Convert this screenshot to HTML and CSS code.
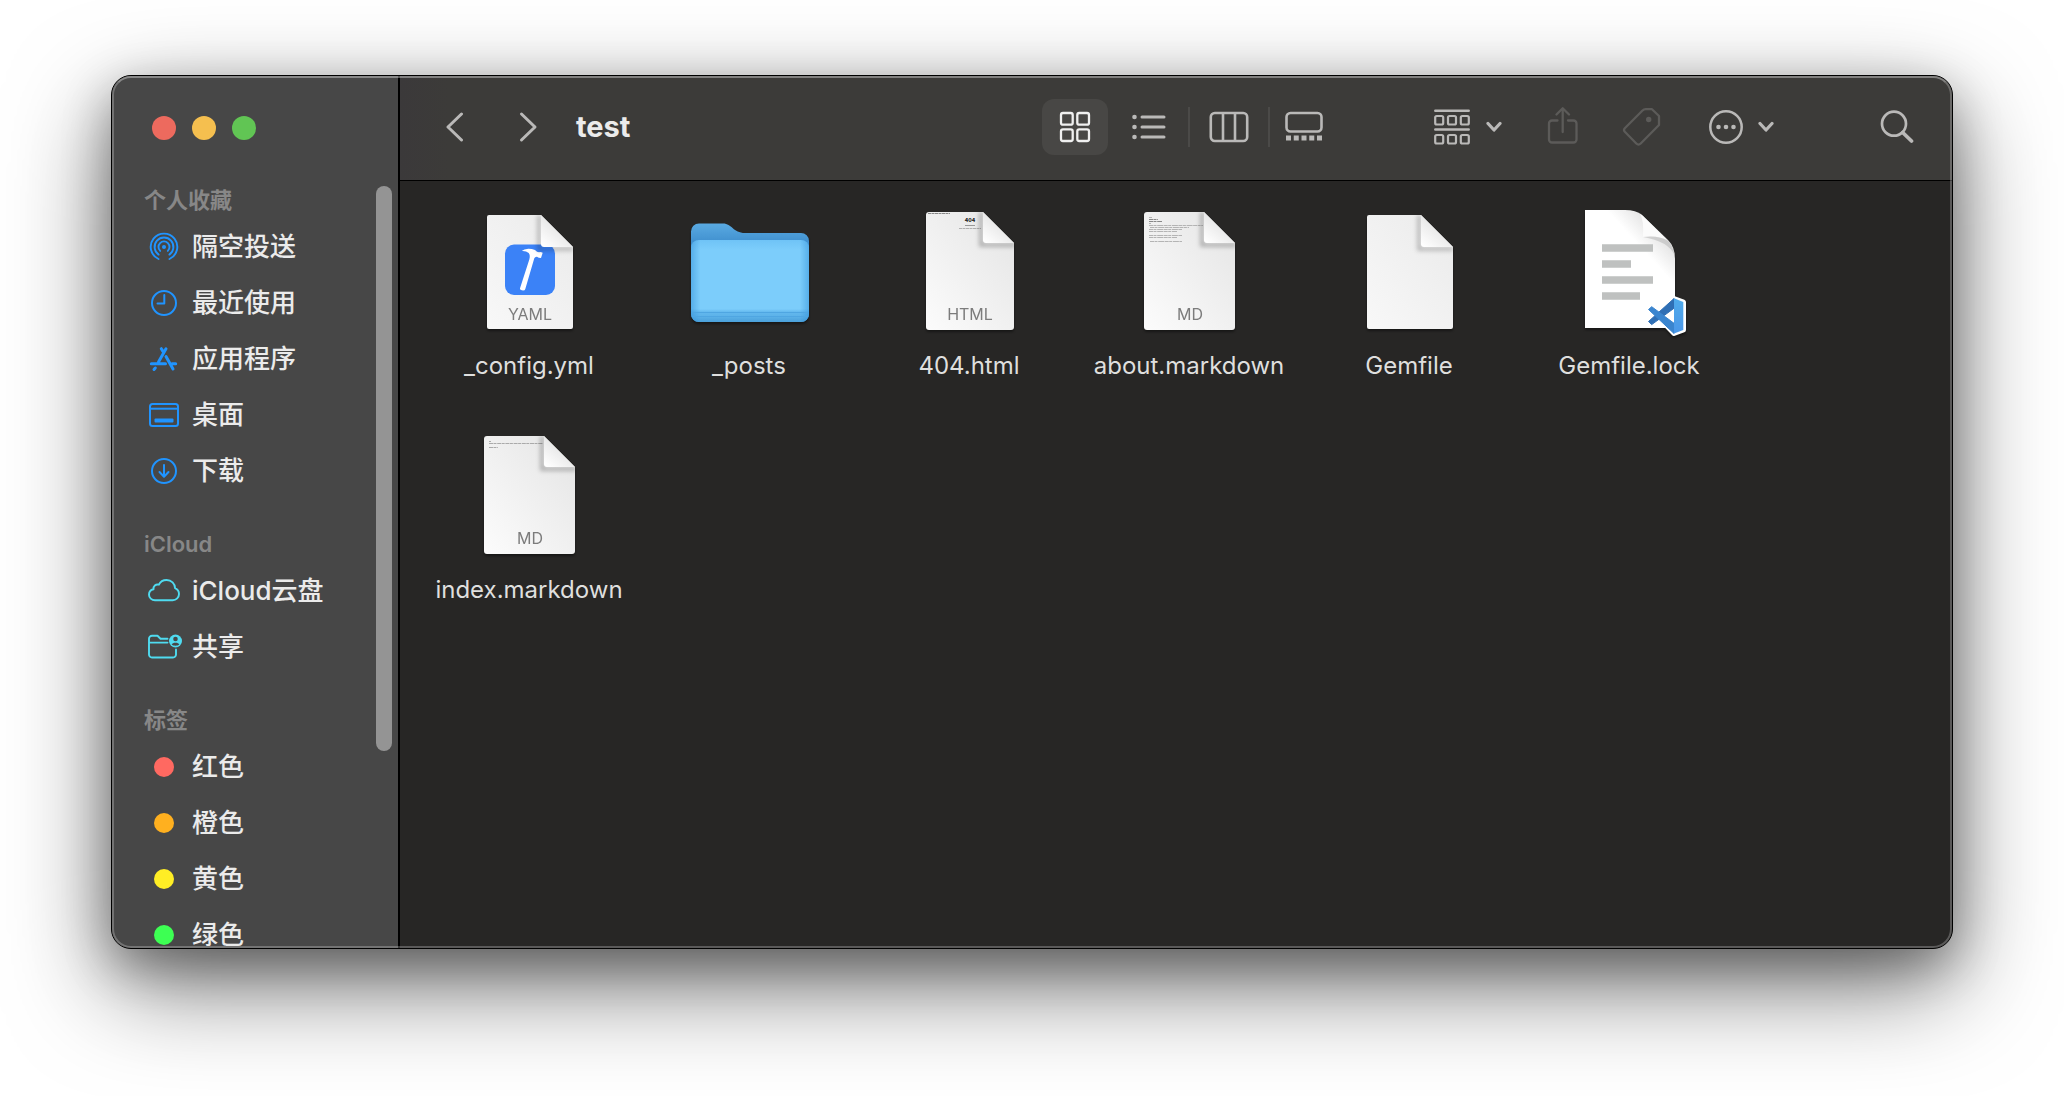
FILE: index.html
```html
<!DOCTYPE html>
<html lang="zh-CN">
<head>
<meta charset="utf-8">
<meta name="viewport" content="width=device-width, initial-scale=1">
<title>test</title>
<link rel="stylesheet" href="styles.css">
</head>
<body>
<svg class="defs" aria-hidden="true">
  <defs>
    <linearGradient id="paper" x1="1" y1="0.2" x2="0" y2="1">
      <stop offset="0" stop-color="#e4e4e4"/><stop offset="1" stop-color="#ffffff"/>
    </linearGradient>
    <linearGradient id="paper-plain" x1="1" y1="0.2" x2="0" y2="1">
      <stop offset="0" stop-color="#eaeaea"/><stop offset="1" stop-color="#fafafa"/>
    </linearGradient>
    <linearGradient id="fold" x1="0.1" y1="1" x2="0.6" y2="0.4">
      <stop offset="0" stop-color="#ffffff"/><stop offset="1" stop-color="#e6e6e6"/>
    </linearGradient>
    <linearGradient id="folder-back" x1="0" y1="0" x2="0" y2="1">
      <stop offset="0" stop-color="#5aaae2"/><stop offset="0.2" stop-color="#3f8fce"/><stop offset="1" stop-color="#3f8fce"/>
    </linearGradient>
    <linearGradient id="folder-front" x1="0" y1="0" x2="0" y2="1">
      <stop offset="0" stop-color="#6fc3f6"/><stop offset="0.12" stop-color="#7ccdfb"/><stop offset="0.84" stop-color="#7ccdfb"/><stop offset="0.88" stop-color="#63b8ee"/><stop offset="0.93" stop-color="#5cb2e9"/><stop offset="1" stop-color="#4ba0da"/>
    </linearGradient>
    <linearGradient id="folder-sides" x1="0" y1="0" x2="1" y2="0">
      <stop offset="0" stop-color="#2f8fd8" stop-opacity="0.5"/><stop offset="0.08" stop-color="#2f8fd8" stop-opacity="0"/><stop offset="0.92" stop-color="#2f8fd8" stop-opacity="0"/><stop offset="1" stop-color="#2f8fd8" stop-opacity="0.5"/>
    </linearGradient>
    <linearGradient id="lock-paper" x1="0.6" y1="0.3" x2="0.85" y2="0">
      <stop offset="0" stop-color="#ffffff"/><stop offset="1" stop-color="#d2d2d2"/>
    </linearGradient>
    <linearGradient id="code-slab" x1="0" y1="0" x2="0" y2="1">
      <stop offset="0" stop-color="#4fabec"/><stop offset="1" stop-color="#4b97e8"/>
    </linearGradient>
    <filter id="soft" x="-50%" y="-50%" width="200%" height="200%"><feGaussianBlur stdDeviation="2"/></filter>
    <clipPath id="page-wide"><path d="M22 4H79L110 35V119a3 3 0 0 1-3 3H22a3 3 0 0 1-3-3V7a3 3 0 0 1 3-3Z"/></clipPath>
    <clipPath id="page-small"><path d="M24 7H76L108 39V119a2 2 0 0 1-2 2H24a2 2 0 0 1-2-2V9a2 2 0 0 1 2-2Z"/></clipPath>
    <clipPath id="page-html"><path d="M24 4H78L109 35V119a3 3 0 0 1-3 3H24a3 3 0 0 1-3-3V7a3 3 0 0 1 3-3Z"/></clipPath>
    <symbol id="chevron-down" viewBox="0 0 16 12"><path d="M2 2.500L8 9L14 2.500" fill="none" stroke="currentColor" stroke-width="3.200" stroke-linecap="round" stroke-linejoin="round"/></symbol>
  </defs>
</svg>

<main class="window">
  <aside class="sidebar">
    <div class="lights">
      <button class="light light-close" aria-label="关闭"></button>
      <button class="light light-minimize" aria-label="最小化"></button>
      <button class="light light-zoom" aria-label="缩放"></button>
    </div>
    <nav class="places">
      <section class="section">
        <h2 class="section-title">个人收藏</h2>
        <a class="place" href="#airdrop">
          <svg class="place-icon blue" viewBox="0 0 32 32"><g fill="none" stroke="currentColor" stroke-width="1.900" stroke-linecap="round"><path d="M10.500 28A13.300 13.300 0 1 1 21.500 28"/><path d="M10.600 23.600A9.400 9.400 0 1 1 21.400 23.600"/><path d="M12.200 19.900A5.500 5.500 0 1 1 19.800 19.900"/></g><circle cx="16" cy="16" r="2" fill="currentColor"/></svg>
          <span>隔空投送</span></a>
        <a class="place" href="#recents">
          <svg class="place-icon blue" viewBox="0 0 32 32" fill="none" stroke="currentColor" stroke-width="2" stroke-linecap="round" stroke-linejoin="round"><circle cx="16" cy="16" r="12"/><path d="M16.300 8V16.500H9.500"/></svg>
          <span>最近使用</span></a>
        <a class="place" href="#applications">
          <svg class="place-icon blue" viewBox="0 0 32 32" fill="none" stroke="currentColor" stroke-width="3" stroke-linecap="round"><path d="M18 5.700L10.500 19M13.300 5.700L15 8.500M18 13.500L25 26M3.300 20.700H17.500M24 20.700H27.700M7.300 25L6 26.500"/></svg>
          <span>应用程序</span></a>
        <a class="place" href="#desktop">
          <svg class="place-icon blue" viewBox="0 0 32 32"><g fill="none" stroke="currentColor" stroke-width="2"><rect x="2" y="5" width="28" height="22" rx="2.500"/><path d="M2 9.700H30"/></g><rect x="6.500" y="19.500" width="19" height="4" rx="1" fill="currentColor"/></svg>
          <span>桌面</span></a>
        <a class="place" href="#downloads">
          <svg class="place-icon blue" viewBox="0 0 32 32" fill="none" stroke="currentColor" stroke-width="2" stroke-linecap="round" stroke-linejoin="round"><circle cx="16" cy="16" r="12"/><path d="M16 10V21.500M11.500 17L16 21.700L20.500 17"/></svg>
          <span>下载</span></a>
      </section>
      <section class="section">
        <h2 class="section-title">iCloud</h2>
        <a class="place" href="#icloud">
          <svg class="place-icon cyan" viewBox="0 0 32 32" fill="none" stroke="currentColor" stroke-width="1.900" stroke-linejoin="round"><path d="M7 25.200C3.700 25.200 1 22.800 1 19.700C1 17 2.900 14.900 5.500 14.300C5.100 11.300 7.700 8.900 10.900 9.700C12.300 6.700 15.300 5 18.600 5C23.300 5 27 8.600 27.100 13.200C29.600 14.400 31 16.400 31 19C31 22.500 28.300 25.200 24.700 25.200Z"/></svg>
          <span>iCloud云盘</span></a>
        <a class="place" href="#shared">
          <svg class="place-icon cyan" viewBox="0 0 32 32"><path d="M19.500 7.700H12.500L9.500 4.800H4A3 3 0 0 0 1 7.800V23.500A3 3 0 0 0 4 26.500H25A3 3 0 0 0 28 23.500V18.500M1 11.600H19.500" fill="none" stroke="currentColor" stroke-width="1.900" stroke-linecap="round" stroke-linejoin="round"/><circle cx="27.500" cy="10" r="6.500" fill="currentColor"/><circle cx="27.500" cy="8" r="2.300" fill="#474747"/><path d="M23.700 13.600C24.500 11.200 30.500 11.200 31.300 13.600C29.500 15.200 25.500 15.200 23.700 13.600Z" fill="#474747"/></svg>
          <span>共享</span></a>
      </section>
      <section class="section">
        <h2 class="section-title">标签</h2>
        <a class="place" href="#red"><span class="tag tag-red"></span><span>红色</span></a>
        <a class="place" href="#orange"><span class="tag tag-orange"></span><span>橙色</span></a>
        <a class="place" href="#yellow"><span class="tag tag-yellow"></span><span>黄色</span></a>
        <a class="place" href="#green"><span class="tag tag-green"></span><span>绿色</span></a>
      </section>
      <div class="scroll-thumb"></div>
    </nav>
  </aside>

  <div class="content">
    <header class="toolbar">
      <div class="history">
        <button class="tool" aria-label="后退"><svg width="20" height="32" viewBox="0 0 20 32" fill="none" stroke="currentColor" stroke-width="3" stroke-linecap="round" stroke-linejoin="round"><path d="M15.500 3L2 16L15.500 29"/></svg></button>
        <button class="tool" aria-label="前进"><svg width="20" height="32" viewBox="0 0 20 32" fill="none" stroke="currentColor" stroke-width="3" stroke-linecap="round" stroke-linejoin="round"><path d="M3.500 3L17 16L3.500 29"/></svg></button>
      </div>
      <h1 class="title">test</h1>
      <div class="views">
        <button class="tool view view-active" aria-label="图标"><svg width="32" height="32" viewBox="0 0 32 32" fill="none" stroke="currentColor" stroke-width="2.300"><rect x="2" y="2" width="11.700" height="11.700" rx="2"/><rect x="18.300" y="2" width="11.700" height="11.700" rx="2"/><rect x="2" y="18.300" width="11.700" height="11.700" rx="2"/><rect x="18.300" y="18.300" width="11.700" height="11.700" rx="2"/></svg></button>
        <button class="tool view" aria-label="列表"><svg width="34" height="32" viewBox="0 0 34 32" fill="currentColor"><circle cx="2.500" cy="6" r="2.300"/><circle cx="2.500" cy="16" r="2.300"/><circle cx="2.500" cy="26" r="2.300"/><path d="M10 6H32M10 16H32M10 26H32" stroke="currentColor" stroke-width="3" stroke-linecap="round"/></svg></button>
        <span class="view-rule"></span>
        <button class="tool view" aria-label="分栏"><svg width="40" height="32" viewBox="0 0 40 32" fill="none" stroke="currentColor" stroke-width="2.600"><rect x="1.800" y="2" width="36.400" height="28" rx="4"/><path d="M14 2V30M26 2V30"/></svg></button>
        <span class="view-rule"></span>
        <button class="tool view view-narrow" aria-label="画廊"><svg width="38" height="32" viewBox="0 0 38 32" fill="none" stroke="currentColor" stroke-width="2.600"><rect x="1.500" y="2" width="35" height="18.500" rx="4"/><path d="M1 27H37" stroke-width="5" stroke-dasharray="5 2.750"/></svg></button>
      </div>
      <div class="actions">
        <button class="tool" aria-label="分组"><svg width="36" height="36" viewBox="0 0 36 36" fill="none" stroke="currentColor" stroke-width="2.500"><path d="M1.300 1.700H34.700M1.300 20.500H34.700" stroke-linecap="round"/><g stroke-width="2.200"><rect x="1.200" y="7" width="8" height="8.500" rx="1.500"/><rect x="14" y="7" width="8" height="8.500" rx="1.500"/><rect x="26.800" y="7" width="8" height="8.500" rx="1.500"/><rect x="1.200" y="26" width="8" height="8.500" rx="1.500"/><rect x="14" y="26" width="8" height="8.500" rx="1.500"/><rect x="26.800" y="26" width="8" height="8.500" rx="1.500"/></g></svg><svg width="16" height="12"><use href="#chevron-down"/></svg></button>
        <button class="tool" disabled aria-label="共享"><svg width="32" height="40" viewBox="0 0 32 40" fill="none" stroke="currentColor" stroke-width="2.300" stroke-linecap="round" stroke-linejoin="round"><path d="M11.500 13.500H6A3 3 0 0 0 3 16.500V32.500A3 3 0 0 0 6 35.500H27.500A3 3 0 0 0 30.500 32.500V16.500A3 3 0 0 0 27.500 13.500H22M16.700 25V1.500M10.500 7.500L16.700 1.300L23 7.500"/></svg></button>
        <button class="tool" disabled aria-label="标签"><svg width="40" height="40" viewBox="0 0 40 40"><path d="M2.800 21.300L20.500 3.500Q21.800 2.200 23.700 2.200H30L37 9V18L18.700 36.500Q16.500 38.700 14.300 36.500L2.800 24.700Q1.200 23 2.800 21.300Z" fill="none" stroke="currentColor" stroke-width="2.300" stroke-linejoin="round"/><circle cx="26.700" cy="12.500" r="2.700" fill="currentColor"/></svg></button>
        <button class="tool more" aria-label="更多"><svg width="38" height="36" viewBox="0 0 38 36"><circle cx="20" cy="18" r="15.700" fill="none" stroke="currentColor" stroke-width="2.500"/><g fill="currentColor"><circle cx="12.500" cy="18" r="2.300"/><circle cx="20" cy="18" r="2.300"/><circle cx="27.500" cy="18" r="2.300"/></g></svg><svg width="16" height="12"><use href="#chevron-down"/></svg></button>
      </div>
      <button class="tool" aria-label="搜索"><svg width="34" height="34" viewBox="0 0 34 34" fill="none" stroke="currentColor" stroke-linecap="round"><circle cx="14" cy="13.700" r="12" stroke-width="2.700"/><path d="M22.700 22.500L31.500 31" stroke-width="3.700"/></svg></button>
    </header>

    <ul class="files">
      <li><button class="file">
        <svg class="file-icon" viewBox="0 0 128 128">
          <g clip-path="url(#page-small)"><rect width="128" height="128" fill="url(#paper-plain)"/>
          <rect x="40" y="36.500" width="50" height="50.500" rx="9" fill="#3b82f7"/>
          <path d="M56.700 43Q59 41 63.300 40.700Q67 40.700 70 42Q72 44.200 74 44.300Q75.500 43.300 77.700 44.700L76 50Q73.500 50 72 48.700Q70 48.500 69.300 50.300L60.300 81Q60 82.600 58 82.600L56 82Q54.600 81.500 55 80.300L64.300 51.500Q65.500 47 63.700 45Q61 42.600 56.700 43Z" fill="#fff"/>
          <path d="M74 7V41H108" fill="none" stroke="#000" stroke-opacity="0.220" stroke-width="4" filter="url(#soft)"/></g>
          <path d="M76 7L108 39H79Q76 39 76 36Z" fill="url(#fold)"/>
          <text class="kind" x="65" y="112">YAML</text>
        </svg><span class="file-name">_config.yml</span></button></li>
      <li><button class="file">
        <svg class="file-icon" viewBox="0 0 128 128">
          <path d="M14 15.500H38C47 15.500 48 25 60 25H116A8 8 0 0 1 124 33V106A8 8 0 0 1 116 114H14A8 8 0 0 1 6 106V23.500A8 8 0 0 1 14 15.500Z" fill="url(#folder-back)"/>
          <rect x="6" y="32" width="118" height="82" rx="8" fill="url(#folder-front)"/>
          <rect x="6" y="32" width="118" height="82" rx="8" fill="url(#folder-sides)"/>
          <path d="M7 104.500H123M7 108.500H123" stroke="#4fa6e2" stroke-width="1"/>
        </svg><span class="file-name">_posts</span></button></li>
      <li><button class="file">
        <svg class="file-icon" viewBox="0 0 128 128">
          <g clip-path="url(#page-html)"><rect width="128" height="128" fill="url(#paper)"/>
          <path d="M23 5.500H45" stroke="#888" stroke-width="1" stroke-dasharray="3 0.500"/>
          <text class="preview" x="65" y="13.500">404</text>
          <path d="M60 17.500H70" stroke="#999" stroke-width="1"/><path d="M54 20.500H76" stroke="#b0b0b0" stroke-width="1" stroke-dasharray="3 0.500"/>
          <path d="M76 4V37H110" fill="none" stroke="#000" stroke-opacity="0.250" stroke-width="4" filter="url(#soft)"/></g>
          <path d="M78 4L109 35H81Q78 35 78 32Z" fill="url(#fold)"/>
          <text class="kind" x="65" y="112">HTML</text>
        </svg><span class="file-name">404.html</span></button></li>
      <li><button class="file">
        <svg class="file-icon" viewBox="0 0 128 128">
          <g clip-path="url(#page-wide)"><rect width="128" height="128" fill="url(#paper)"/>
          <g stroke="#b4b4b4" stroke-width="1" stroke-dasharray="4 0.500 3 0.700 6 0.500"><path d="M24 9.500H27M24 15.500H26M24 17.500H78M25 19.500H64M24 21.500H57M24 23.500H52M24 27.500H57M24 29.500H52M25 33.500H57"/><path d="M24 11.500H33M24 13.500H37" stroke="#888"/></g>
          <path d="M77 4V37H111" fill="none" stroke="#000" stroke-opacity="0.250" stroke-width="4" filter="url(#soft)"/></g>
          <path d="M79 4L110 35H82Q79 35 79 32Z" fill="url(#fold)"/>
          <text class="kind" x="65" y="112">MD</text>
        </svg><span class="file-name">about.markdown</span></button></li>
      <li><button class="file">
        <svg class="file-icon" viewBox="0 0 128 128">
          <g clip-path="url(#page-small)"><rect width="128" height="128" fill="url(#paper-plain)"/>
          <path d="M74 7V41H108" fill="none" stroke="#000" stroke-opacity="0.220" stroke-width="4" filter="url(#soft)"/></g>
          <path d="M76 7L108 39H79Q76 39 76 36Z" fill="url(#fold)"/>
        </svg><span class="file-name">Gemfile</span></button></li>
      <li><button class="file">
        <svg class="file-icon" viewBox="0 0 128 128">
          <path d="M20 2H60Q71 2 77 7L103 32Q110 39 110 51V120H20Z" fill="url(#lock-paper)"/>
          <path d="M75 5.500Q79 12 78 29Q93 27 102 32L78 8Z" fill="#fbfbfb"/>
          <path d="M78 29Q94 27 103 33Q108 38 109.500 47Q103 33 78 29Z" fill="#bbb" opacity="0.600"/>
          <path d="M37 40H88M37 56H66M37 72H88M37 88H75" stroke="#bfc1c0" stroke-width="7.500"/>
          <path d="M109 90L119 94V122L109 126L99 117L86 117L83 114L83 101L86 98.500L99 100Z" fill="#fff" />
          <path d="M109 90.500L118.500 94V122L109 125.500L96 112" fill="none" stroke="#fff" stroke-width="5" stroke-linejoin="round"/>
          <path d="M83.500 113.500L86.700 116.600L109 100.300V90.500Z" fill="#2f6fb5" stroke="#2f6fb5" stroke-width="1" stroke-linejoin="round"/>
          <path d="M83.500 101.500L86.700 98.700L109 115.300V125.500Z" fill="#3a85cf" stroke="#3a85cf" stroke-width="1" stroke-linejoin="round"/>
          <path d="M109 90.300L118.300 94V122L109 125.500Z" fill="url(#code-slab)"/>
        </svg><span class="file-name">Gemfile.lock</span></button></li>
      <li><button class="file">
        <svg class="file-icon" viewBox="0 0 128 128">
          <g clip-path="url(#page-wide)"><rect width="128" height="128" fill="url(#paper)"/>
          <path d="M24 9.500H26M24 11.500H78M24 15.500H33" stroke="#aaa" stroke-width="1" stroke-dasharray="4 0.500 3 0.700"/>
          <path d="M77 4V37H111" fill="none" stroke="#000" stroke-opacity="0.250" stroke-width="4" filter="url(#soft)"/></g>
          <path d="M79 4L110 35H82Q79 35 79 32Z" fill="url(#fold)"/>
          <text class="kind" x="65" y="112">MD</text>
        </svg><span class="file-name">index.markdown</span></button></li>
    </ul>
  </div>
</main>
</body>
</html>
```

FILE: styles.css
```css
* { box-sizing: border-box; }

body {
  margin: 0;
  height: 100vh;
  padding: 75px 111px 147px;
  background: #fff;
  font-family: Inter, "Noto Sans CJK SC", sans-serif;
  overflow: hidden;
}

button {
  margin: 0;
  padding: 0;
  border: 0;
  background: none;
  color: inherit;
  font: inherit;
}

h1, h2, ul { margin: 0; padding: 0; }
ul { list-style: none; }
.defs { position: absolute; width: 0; height: 0; }

/* Window frame */
.window {
  position: relative;
  display: flex;
  height: 100%;
  border: 1px solid #000;
  border-radius: 20px;
  background: #272625;
  box-shadow: 0 36px 100px rgba(0, 0, 0, 0.55), 0 16px 48px rgba(0, 0, 0, 0.3);
}

.window::after {
  content: "";
  position: absolute;
  inset: 0;
  border: 2px solid rgba(255, 255, 255, 0.24);
  border-top-color: rgba(255, 255, 255, 0.36);
  border-radius: 19px;
  pointer-events: none;
}

/* Sidebar */
.sidebar {
  display: flex;
  flex: 0 0 288px;
  flex-direction: column;
  border-right: 2px solid #000;
  border-radius: 19px 0 0 19px;
  background: #474747;
  overflow: hidden;
}

.lights {
  display: flex;
  flex: 0 0 105px;
  gap: 16px;
  padding: 40px 40px 0;
}

.light { width: 24px; height: 24px; border-radius: 50%; }
.light-close { background: #ed6a5e; }
.light-minimize { background: #f5bf4f; }
.light-zoom { background: #61c554; }

.places {
  position: relative;
  flex: 1;
  min-height: 0;
  overflow: hidden;
}

.section { margin-bottom: 26px; }

.section-title {
  padding-left: 32px;
  color: #878787;
  font-size: 22px;
  font-weight: 600;
  line-height: 38px;
}

.place {
  display: flex;
  align-items: center;
  gap: 12px;
  height: 56px;
  padding-left: 36px;
  color: #ebebeb;
  font-size: 26px;
  font-weight: 500;
  line-height: 56px;
  text-decoration: none;
  white-space: nowrap;
}

.place-icon { flex: none; width: 32px; height: 32px; overflow: visible; }
.blue { color: #2094ff; }
.cyan { color: #4fdbf0; }

.tag { width: 20px; height: 20px; margin: 0 6px; border-radius: 50%; }
.tag-red { background: #ff6961; }
.tag-orange { background: #ffb01f; }
.tag-yellow { background: #ffee25; }
.tag-green { background: #3dff53; }

.scroll-thumb {
  position: absolute;
  top: 5px;
  right: 6px;
  width: 16px;
  height: 73.6%;
  border-radius: 8px;
  background: #949494;
}

/* Toolbar */
.content { display: flex; flex: 1; flex-direction: column; min-width: 0; }

.toolbar {
  display: flex;
  align-items: center;
  flex: 0 0 105px;
  padding: 0 38px 2px 46px;
  border-bottom: 1px solid #000;
  border-radius: 0 19px 0 0;
  background: linear-gradient(90deg, #3b393a, #3c3b39 48px);
}

.tool {
  display: flex;
  align-items: center;
  justify-content: center;
  gap: 16px;
  color: #bab9b8;
}

.tool:disabled { color: #5c5b59; }
.history { display: flex; gap: 52px; margin-right: 38px; }

.title {
  flex: 1;
  color: #ebebeb;
  font-size: 29px;
  font-weight: 700;
  line-height: 40px;
}

.views { display: flex; align-items: center; gap: 6px; margin-right: 102px; }
.view { width: 66px; height: 56px; border-radius: 12px; }
.view-active { margin-right: 2px; background: #484745; color: #f0f0f0; }
.view-narrow { width: 56px; }
.view-rule { width: 2px; height: 40px; background: #4b4a48; }
.actions { display: flex; align-items: center; gap: 44px; margin-right: 106px; }
.more { gap: 14px; }

/* File grid */
.files {
  display: grid;
  grid-template-columns: repeat(auto-fill, 220px);
  row-gap: 50px;
  padding: 27px 0 0 19px;
}

.file {
  display: flex;
  align-items: center;
  flex-direction: column;
  gap: 14px;
  width: 100%;
}

.file-icon {
  width: 128px;
  height: 128px;
  overflow: visible;
  filter: drop-shadow(0 2px 1px rgba(0, 0, 0, 0.4));
}

.file-name {
  color: #dfdfde;
  font-size: 24px;
  font-weight: 400;
  line-height: 32px;
}

.kind { fill: #7c7c7c; font-size: 16px; text-anchor: middle; }
.preview { fill: #222; font-size: 5px; font-weight: 800; text-anchor: middle; }
```
